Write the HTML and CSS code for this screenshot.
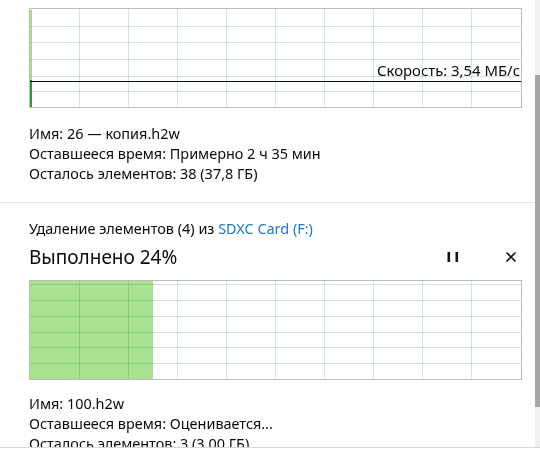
FILE: index.html
```html
<!DOCTYPE html>
<html lang="ru">
<head>
<meta charset="utf-8">
<title>Копирование</title>
<link rel="stylesheet" href="styles.css">
</head>
<body>
<div class="window">
  <div class="content">
    <section class="op op-first">
      <div class="chart">
        <svg class="grid" width="491" height="98" viewBox="0 0 491 98">
          <rect class="bar-light" x="0" y="1" width="2" height="71"/>
          <rect class="bar-dark" x="0" y="71" width="2" height="27"/>
          <g class="lines">
            <line x1="0" x2="491" y1="17.5" y2="17.5"/>
            <line x1="0" x2="491" y1="33.5" y2="33.5"/>
            <line x1="0" x2="491" y1="50.5" y2="50.5"/>
            <line x1="0" x2="491" y1="67.5" y2="67.5"/>
            <line x1="0" x2="491" y1="82.5" y2="82.5"/>
            <line x1="49.5" x2="49.5" y1="0" y2="98"/>
            <line x1="98.5" x2="98.5" y1="0" y2="98"/>
            <line x1="147.5" x2="147.5" y1="0" y2="98"/>
            <line x1="196.5" x2="196.5" y1="0" y2="98"/>
            <line x1="245.5" x2="245.5" y1="0" y2="98"/>
            <line x1="294.5" x2="294.5" y1="0" y2="98"/>
            <line x1="343.5" x2="343.5" y1="0" y2="98"/>
            <line x1="392.5" x2="392.5" y1="0" y2="98"/>
            <line x1="441.5" x2="441.5" y1="0" y2="98"/>
          </g>
          <line class="speed-line" x1="0" x2="491" y1="72.5" y2="72.5"/>
        </svg>
        <div class="speed">Скорость: 3,54 МБ/с</div>
      </div>
      <div class="details">
        <div>Имя: 26 — копия.h2w</div>
        <div>Оставшееся время: Примерно 2 ч 35 мин</div>
        <div>Осталось элементов: 38 (37,8 ГБ)</div>
      </div>
    </section>
    <section class="op">
      <div class="title">Удаление элементов (4) из <span class="link">SDXC Card (F:)</span></div>
      <div class="status-row">
        <div class="status">Выполнено 24%</div>
        <div class="controls">
          <span class="ctl">
            <svg width="12" height="10" viewBox="0 0 12 10"><rect x="0.5" y="0" width="2.6" height="10"/><rect x="8.5" y="0" width="2.6" height="10"/></svg>
          </span>
          <span class="ctl">
            <svg width="12" height="12" viewBox="0 0 12 12"><path d="M1.5 1.5 L10.5 10.5 M10.5 1.5 L1.5 10.5"/></svg>
          </span>
        </div>
      </div>
      <div class="chart">
        <svg class="grid" width="491" height="98" viewBox="0 0 491 98">
          <rect class="fill" x="0" y="0" width="123" height="98"/>
          <g class="lines">
            <line x1="0" x2="491" y1="3.5" y2="3.5"/>
            <line x1="0" x2="491" y1="19.5" y2="19.5"/>
            <line x1="0" x2="491" y1="35.5" y2="35.5"/>
            <line x1="0" x2="491" y1="51.5" y2="51.5"/>
            <line x1="0" x2="491" y1="66.5" y2="66.5"/>
            <line x1="0" x2="491" y1="82.5" y2="82.5"/>
            <line x1="49.5" x2="49.5" y1="0" y2="98"/>
            <line x1="98.5" x2="98.5" y1="0" y2="98"/>
            <line x1="147.5" x2="147.5" y1="0" y2="98"/>
            <line x1="196.5" x2="196.5" y1="0" y2="98"/>
            <line x1="245.5" x2="245.5" y1="0" y2="98"/>
            <line x1="294.5" x2="294.5" y1="0" y2="98"/>
            <line x1="343.5" x2="343.5" y1="0" y2="98"/>
            <line x1="392.5" x2="392.5" y1="0" y2="98"/>
            <line x1="441.5" x2="441.5" y1="0" y2="98"/>
          </g>
        </svg>
      </div>
      <div class="details">
        <div>Имя: 100.h2w</div>
        <div>Оставшееся время: Оценивается...</div>
        <div>Осталось элементов: 3 (3,00 ГБ)</div>
      </div>
    </section>
  </div>
  <div class="scrollbar"><div class="thumb"></div></div>
</div>
</body>
</html>
```

FILE: styles.css
```css
html, body {
  margin: 0;
  padding: 0;
  background: #ffffff;
}

body {
  font-family: "Noto Sans", "Open Sans", "DejaVu Sans", sans-serif;
  font-size: 14.45px;
  color: #0a0a0a;
}

.window {
  display: flex;
  height: 447px;
  border-bottom: 1px solid #d6d6d6;
  overflow: hidden;
}

.content {
  flex: 1;
  min-width: 0;
}

.op {
  padding: 0 13px 0 29px;
}

.op-first {
  padding-top: 8px;
  padding-bottom: 18px;
  border-bottom: 1px solid #e4e4e4;
}

.chart {
  position: relative;
  width: 491px;
  height: 98px;
  border: 1px solid #bcbcbc;
  background: #ffffff;
}

.grid {
  display: block;
}

.grid .lines line {
  stroke: #d3e7da;
  stroke-width: 1;
  mix-blend-mode: multiply;
}

.bar-light {
  fill: #a6dc8e;
}

.bar-dark {
  fill: #2a9d37;
}

.fill {
  fill: #a8e290;
}

.speed-line {
  stroke: #0a0a0a;
  stroke-width: 1.2;
}

.speed {
  position: absolute;
  right: 1px;
  bottom: 27px;
  font-size: 14.9px;
  line-height: 19px;
  white-space: nowrap;
}

.details {
  margin-top: 16px;
  line-height: 20px;
  white-space: nowrap;
}

.op:not(.op-first) {
  padding-top: 16px;
}

.op:not(.op-first) .details {
  margin-top: 14px;
}

.title {
  line-height: 20px;
  white-space: nowrap;
}

.link {
  color: #2377c8;
}

.status-row {
  display: flex;
  align-items: center;
  justify-content: space-between;
  height: 28px;
  margin-top: 4px;
  margin-bottom: 9px;
}

.status {
  font-size: 19px;
  line-height: 28px;
  color: #0a0a0a;
}

.controls {
  display: flex;
  gap: 34px;
  margin-right: -1px;
}

.ctl {
  display: flex;
  align-items: center;
  justify-content: center;
  width: 24px;
  height: 24px;
}

.ctl svg {
  display: block;
  fill: #111111;
  stroke: #111111;
}

.ctl svg rect {
  stroke: none;
}

.ctl svg path {
  fill: none;
  stroke-width: 1.6;
}

.scrollbar {
  width: 5px;
  flex: none;
  background: #f0f0f0;
}

.thumb {
  margin-top: 75px;
  height: 332px;
  background: #a6a6a6;
}
```
